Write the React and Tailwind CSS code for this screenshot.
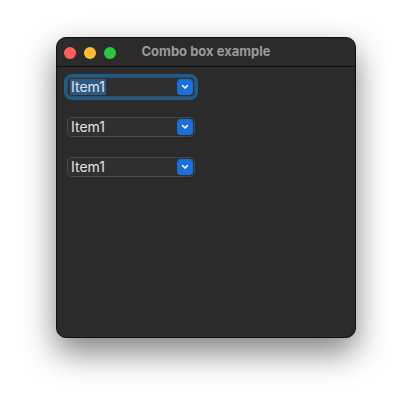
import React from 'react';

function Chevron() {
    return (
        <svg width="8" height="6" viewBox="0 0 8 6" fill="none">
            <path d="M1.5 1.5 L4 4 L6.5 1.5" stroke="white" strokeWidth="1.6" strokeLinecap="round" strokeLinejoin="round" />
        </svg>
    );
}

function ComboBox({ focused }) {
    return (
        <div
            className={`flex items-center h-[20px] w-[128px] rounded-[5px] bg-[#2f2f2f] border border-[#474747] pl-[2px] pr-[1px] ${
                focused ? 'outline-[3.5px] outline-solid outline-[#1c5d8f] border-[#1c5d8f]' : ''
            }`}
        >
            <span
                className={`text-[14px] leading-[16px] text-[#e2e2e2] px-[1px] ${focused ? 'bg-[#2c5a86]' : ''}`}
            >
                Item1
            </span>
            <div className="ml-auto w-[16px] h-[16px] rounded-[4px] bg-[#1a6fdb] flex items-center justify-center">
                <Chevron />
            </div>
        </div>
    );
}

export default function App() {
    return (
        <div className="w-[412px] h-[412px] bg-white pt-[37px]" style={{ fontFamily: 'Inter, "Liberation Sans", sans-serif' }}>
            <div className="mx-auto w-[300px] h-[301px] rounded-[10px] bg-[#2b2b2b] border border-[#111] shadow-[0_14px_32px_rgba(0,0,0,0.5)] overflow-hidden flex flex-col">
                {/* title bar */}
                <div className="relative h-[29px] flex items-center border-b border-[#111] shrink-0">
                    <div className="flex gap-[8px] pl-[7px] pt-[1px]">
                        <span className="w-[12px] h-[12px] rounded-full bg-[#fe5f57]" />
                        <span className="w-[12px] h-[12px] rounded-full bg-[#febc2e]" />
                        <span className="w-[12px] h-[12px] rounded-full bg-[#28c840]" />
                    </div>
                    <div className="absolute inset-0 flex items-center justify-center text-[13px] font-bold text-[#9a9a9a]">
                        Combo box example
                    </div>
                </div>
                {/* content */}
                <div className="flex flex-col gap-[20px] pl-[10px] pt-[10px]">
                    <ComboBox focused />
                    <ComboBox />
                    <ComboBox />
                </div>
            </div>
        </div>
    );
}
